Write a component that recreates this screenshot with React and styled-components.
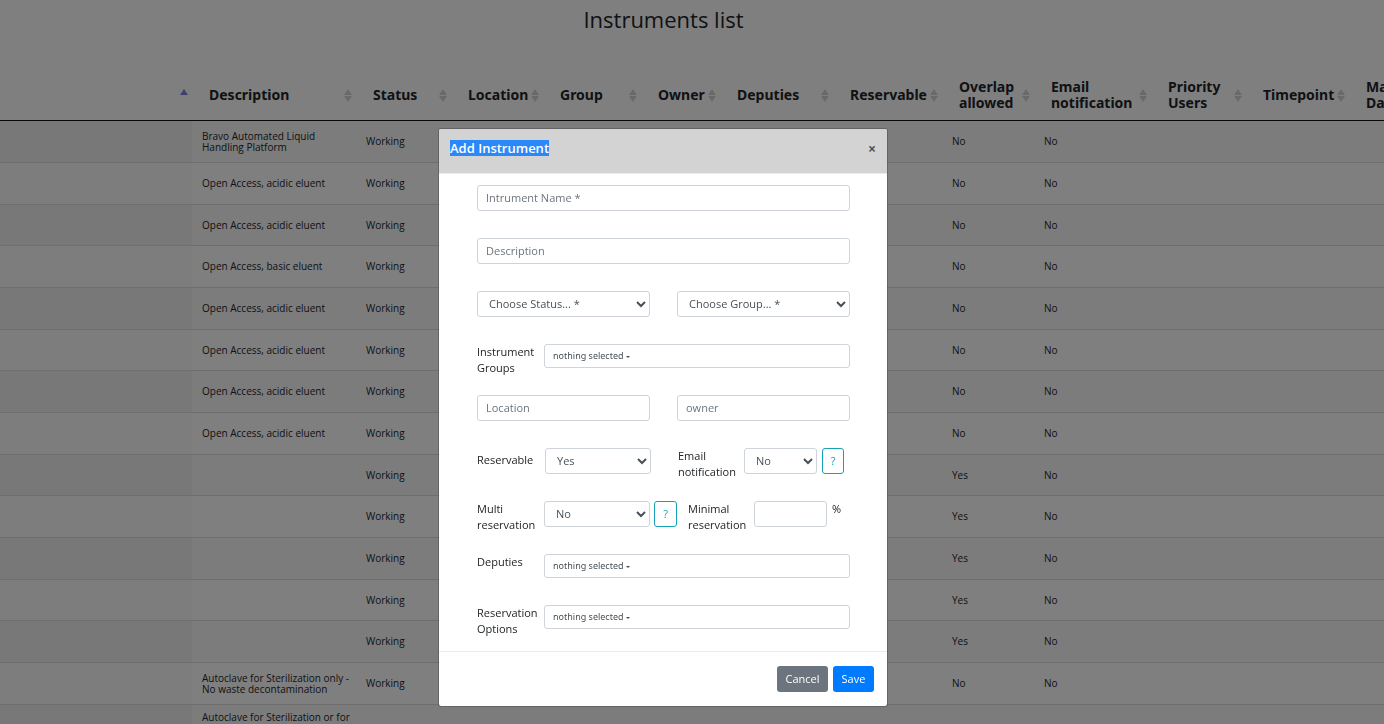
import React from "react";
import styled, { createGlobalStyle, css } from "styled-components";

const GlobalStyle = createGlobalStyle`
  *, *::before, *::after { box-sizing: border-box; }
  html, body { margin: 0; background: #fff; }
  body {
    color: #212529;
    font-family: "Open Sans", "Noto Sans", sans-serif;
    font-size: 11px;
    line-height: 16px;
  }
  button, input, select { font-family: inherit; margin: 0; }
`;

const Page = styled.main`
  height: 100vh;
  overflow: hidden;
`;

const PageTitle = styled.h1`
  margin: 0;
  padding: 4px 57px 36px 0;
  font-size: 22px;
  font-weight: 500;
  line-height: 30px;
  text-align: center;
`;

const Table = styled.table`
  width: max-content;
  border-collapse: separate;
  border-spacing: 0;
`;

const Col = styled.col`
  width: ${(p) => p.$width}px;
`;

const HeadCell = styled.th`
  height: 51px;
  padding: 9px 12px 9px 17px;
  border-bottom: 1px solid #111;
  font-family: "Noto Sans", sans-serif;
  font-size: 14px;
  font-weight: 700;
  line-height: 16px;
  text-align: left;
  position: relative;
`;

const SortIcon = styled.svg`
  position: absolute;
  top: 19px;
  right: 4px;
  width: 8px;
  height: 14px;
`;

const BodyRow = styled.tr`
  height: 42px;
  background: ${(p) => (p.$odd ? "#f9f9f9" : "#fff")};
  &:nth-child(3n) { height: 41px; }
  td:first-child { background: ${(p) => (p.$odd ? "#f1f1f1" : "#fafafa")}; }
`;

const Cell = styled.td`
  padding: 7px 4px 7px 10px;
  border-bottom: 1px solid #ddd;
  font-size: 10px;
  line-height: 11px;
  vertical-align: ${(p) => (p.$top ? "top" : "middle")};
`;

const Backdrop = styled.div`
  position: fixed;
  inset: 0;
  padding: 128px 58px 0 0;
  display: flex;
  justify-content: center;
  align-items: flex-start;
  background: rgba(0, 0, 0, 0.5);
`;

const Dialog = styled.section`
  width: 450px;
  border: 1px solid rgba(0, 0, 0, 0.2);
  border-radius: 3px;
  background: #fff;
  background-clip: padding-box;
`;

const DialogHeader = styled.header`
  display: flex;
  justify-content: space-between;
  align-items: flex-start;
  height: 45px;
  padding: 11px 10px 11px 11px;
  border-bottom: 1px solid #e9ecef;
  border-radius: 2px 2px 0 0;
  background: #d3d3d3;
`;

const DialogTitle = styled.h2`
  margin: 0;
  background: #2b88f8;
  color: #fff;
  font-size: 13px;
  font-weight: 600;
  line-height: 16px;
`;

const CloseButton = styled.button`
  padding: 0;
  border: 0;
  background: none;
  width: 10px;
  color: #555;
  font-size: 14px;
  font-weight: 700;
  line-height: 18px;
`;

const Form = styled.form`
  padding: 11px 37px 0 38px;
`;

const Row = styled.div`
  display: grid;
  grid-template-columns: ${(p) => p.$columns || "1fr"};
  align-items: start;
  min-height: ${(p) => (p.$compact ? 51 : 53)}px;
  &:last-child { min-height: 46px; }
`;

const control = css`
  width: 100%;
  height: 26px;
  border: 1px solid #ced4da;
  border-radius: 3px;
  background: #fff;
  color: #495057;
  font-size: 11px;
`;

const TextInput = styled.input`
  ${control}
  padding: 0 8px 2px;
  &::placeholder { color: #6c757d; opacity: 1; }
`;

const Select = styled.select`
  ${control}
  padding: 0 0 1px 7px;
`;

const Picker = styled.button`
  ${control}
  height: 24px;
  padding: 0 8px 1px;
  display: flex;
  align-items: center;
  gap: 2px;
  font-size: 9px;
  text-align: left;
  &::after {
    content: "";
    margin-top: 3px;
    border: 2px solid transparent;
    border-top-color: currentColor;
    border-bottom: 0;
  }
`;

const PickerText = styled.span`
  font-family: "Noto Sans", sans-serif;
`;

const Label = styled.label`
  padding-top: ${(p) => (p.$centred ? 4 : 0)}px;
  line-height: 16px;
`;

const Unit = styled.span`
  line-height: 16px;
`;

const HelpButton = styled.button`
  width: 100%;
  height: 26px;
  padding: 0 0 2px;
  border: 1px solid #17a2b8;
  border-radius: 3px;
  background: #fff;
  color: #17a2b8;
  font-size: 11px;
`;

const DialogFooter = styled.footer`
  display: flex;
  justify-content: flex-end;
  gap: 5px;
  padding: 14px 13px;
  border-top: 1px solid #e9ecef;
`;

const ActionButton = styled.button`
  width: ${(p) => (p.$primary ? 41 : 51)}px;
  height: 26px;
  padding: 0 0 1px;
  border: 0;
  border-radius: 3px;
  background: ${(p) => (p.$primary ? "#007bff" : "#6c757d")};
  color: #fff;
  font-size: 11px;
  font-weight: 500;
`;

const COLUMNS = [
  { label: "", width: 192, sorted: true },
  { label: "Description", width: 164 },
  { label: "Status", width: 95 },
  { label: "Location", width: 92 },
  { label: "Group", width: 98 },
  { label: "Owner", width: 79 },
  { label: "Deputies", width: 113 },
  { label: "Reservable", width: 109 },
  { label: "Overlap allowed", width: 92 },
  { label: "Email notification", width: 117 },
  { label: "Priority Users", width: 95 },
  { label: "Timepoint", width: 103 },
  { label: "Max Days", width: 86 },
];

const ACIDIC = "Open Access, acidic eluent";
const ROWS = [
  ["Bravo Automated Liquid Handling Platform", "Working", "No", "No"],
  [ACIDIC, "Working", "No", "No"],
  [ACIDIC, "Working", "No", "No"],
  ["Open Access, basic eluent", "Working", "No", "No"],
  [ACIDIC, "Working", "No", "No"],
  [ACIDIC, "Working", "No", "No"],
  [ACIDIC, "Working", "No", "No"],
  [ACIDIC, "Working", "No", "No"],
  ["", "Working", "Yes", "No"],
  ["", "Working", "Yes", "No"],
  ["", "Working", "Yes", "No"],
  ["", "Working", "Yes", "No"],
  ["", "Working", "Yes", "No"],
  ["Autoclave for Sterilization only - No waste decontamination", "Working", "No", "No"],
  ["Autoclave for Sterilization or for", "", "", ""],
];

function SortMark({ sorted }) {
  return (
    <SortIcon viewBox="0 0 8 14" aria-hidden="true">
      <path d="M4 0 8 6H0Z" fill={sorted ? "#8080e0" : "#d3d3d3"} />
      {!sorted && <path d="M4 13 0 7H8Z" fill="#d3d3d3" />}
    </SortIcon>
  );
}

function InstrumentsTable() {
  return (
    <Table>
      <colgroup>
        {COLUMNS.map((c, i) => <Col key={i} $width={c.width} />)}
      </colgroup>
      <thead>
        <tr>
          {COLUMNS.map((c, i) => (
            <HeadCell key={i} scope="col">
              {c.label}
              <SortMark sorted={c.sorted} />
            </HeadCell>
          ))}
        </tr>
      </thead>
      <tbody>
        {ROWS.map(([description, status, overlap, email], i) => (
          <BodyRow key={i} $odd={i % 2 === 0}>
            <Cell />
            <Cell $top={!status}>{description}</Cell>
            <Cell>{status}</Cell>
            <Cell /><Cell /><Cell /><Cell /><Cell />
            <Cell>{overlap}</Cell>
            <Cell>{email}</Cell>
            <Cell /><Cell /><Cell />
          </BodyRow>
        ))}
      </tbody>
    </Table>
  );
}

function AddInstrumentDialog() {
  return (
    <Backdrop>
      <Dialog role="dialog" aria-modal="true" aria-labelledby="dialog-title">
        <DialogHeader>
          <DialogTitle id="dialog-title">Add Instrument</DialogTitle>
          <CloseButton type="button" aria-label="Close">×</CloseButton>
        </DialogHeader>
        <Form>
          <Row><TextInput aria-label="Instrument name" placeholder="Intrument Name *" /></Row>
          <Row><TextInput aria-label="Description" placeholder="Description" /></Row>
          <Row $columns="1fr 27px 1fr">
            <Select aria-label="Status"><option>Choose Status... *</option></Select>
            <span />
            <Select aria-label="Group"><option>Choose Group... *</option></Select>
          </Row>
          <Row $compact $columns="67px 1fr">
            <Label htmlFor="groups">Instrument Groups</Label>
            <Picker type="button" id="groups"><PickerText>nothing selected</PickerText></Picker>
          </Row>
          <Row $columns="1fr 27px 1fr">
            <TextInput aria-label="Location" placeholder="Location" />
            <span />
            <TextInput aria-label="Owner" placeholder="owner" />
          </Row>
          <Row $columns="68px 106px 27px 66px 73px 5px 22px">
            <Label $centred htmlFor="reservable">Reservable</Label>
            <Select id="reservable"><option>Yes</option><option>No</option></Select>
            <span />
            <Label htmlFor="email">Email notification</Label>
            <Select id="email"><option>No</option><option>Yes</option></Select>
            <span />
            <HelpButton type="button">?</HelpButton>
          </Row>
          <Row $columns="67px 106px 4px 23px 11px 66px 73px 5px 1fr">
            <Label htmlFor="multi">Multi reservation</Label>
            <Select id="multi"><option>No</option><option>Yes</option></Select>
            <span />
            <HelpButton type="button">?</HelpButton>
            <span />
            <Label htmlFor="minimal">Minimal reservation</Label>
            <TextInput id="minimal" />
            <span />
            <Unit>%</Unit>
          </Row>
          <Row $compact $columns="67px 1fr">
            <Label htmlFor="deputies">Deputies</Label>
            <Picker type="button" id="deputies"><PickerText>nothing selected</PickerText></Picker>
          </Row>
          <Row $columns="67px 1fr">
            <Label htmlFor="options">Reservation Options</Label>
            <Picker type="button" id="options"><PickerText>nothing selected</PickerText></Picker>
          </Row>
        </Form>
        <DialogFooter>
          <ActionButton type="button">Cancel</ActionButton>
          <ActionButton type="button" $primary>Save</ActionButton>
        </DialogFooter>
      </Dialog>
    </Backdrop>
  );
}

export default function App() {
  return (
    <>
      <GlobalStyle />
      <Page>
        <PageTitle>Instruments list</PageTitle>
        <InstrumentsTable />
      </Page>
      <AddInstrumentDialog />
    </>
  );
}
